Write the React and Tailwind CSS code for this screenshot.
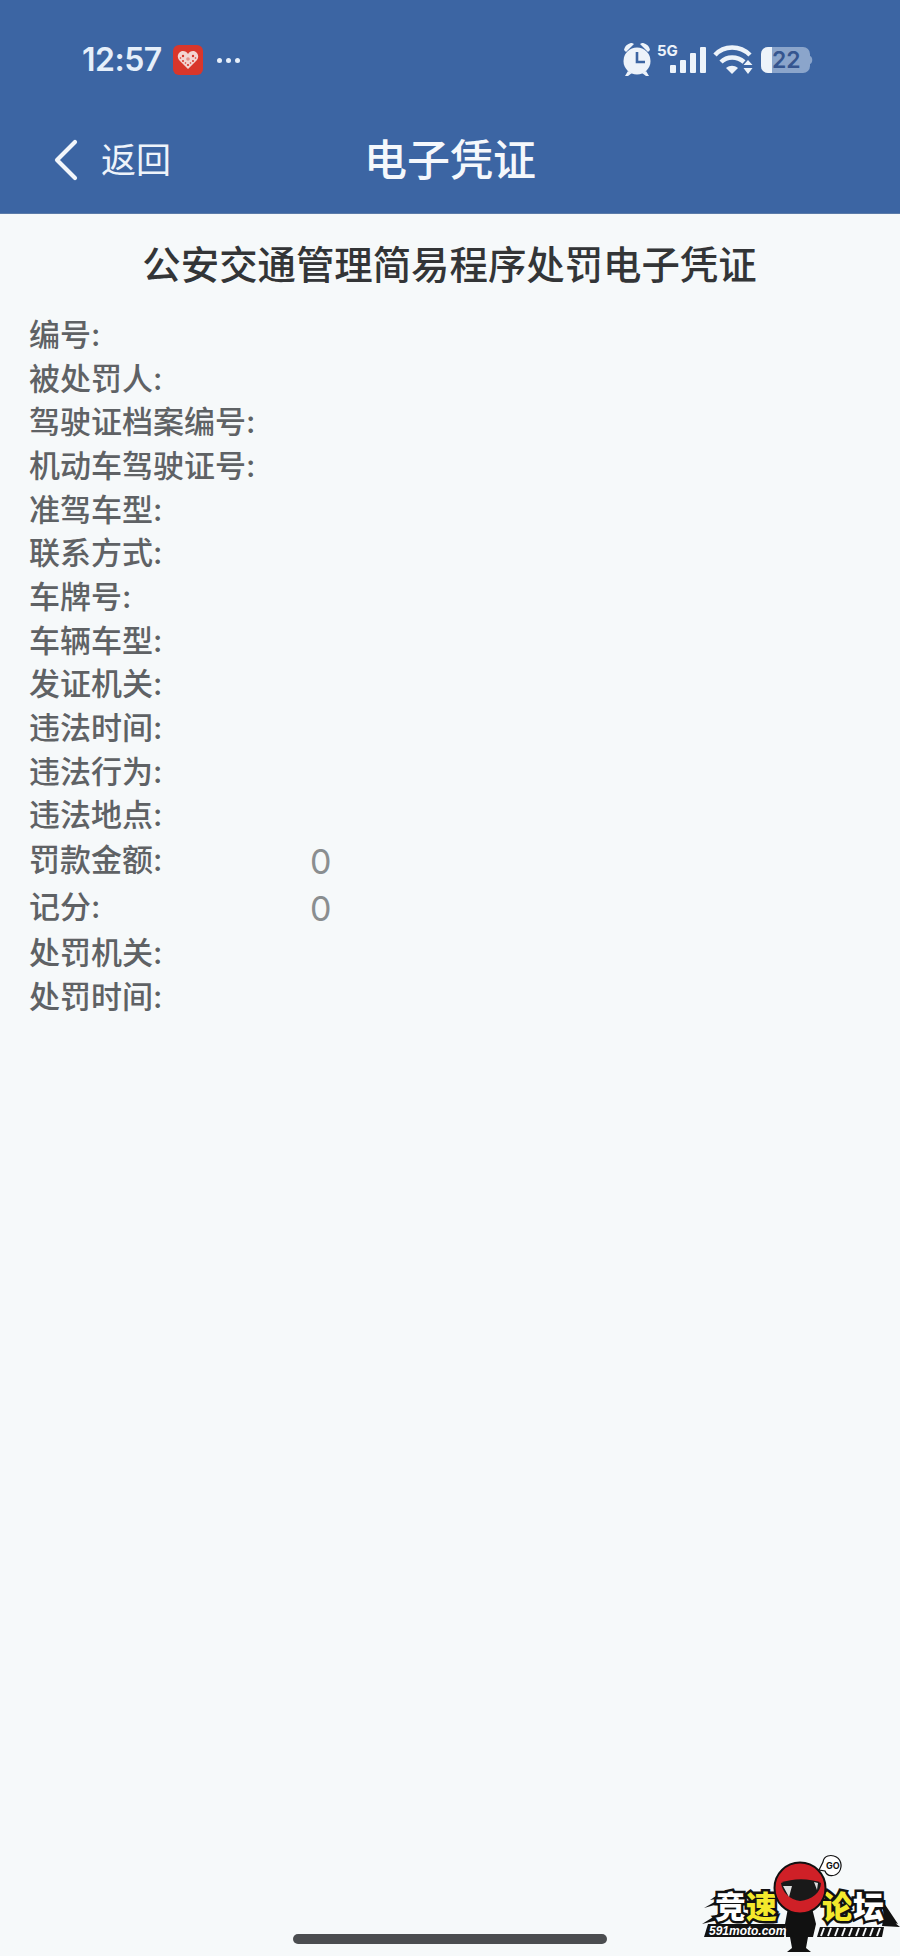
const FONT = 'font-["Inter","Noto_Sans_CJK_SC",sans-serif]';

const ROWS_TOP = [
  '编号:', '被处罚人:', '驾驶证档案编号:', '机动车驾驶证号:', '准驾车型:', '联系方式:',
  '车牌号:', '车辆车型:', '发证机关:', '违法时间:', '违法行为:', '违法地点:',
];
const ROWS_BOTTOM = ['处罚机关:', '处罚时间:'];

function Row({ label, value }) {
  return (
    <div className={`flex text-[31px] ${value ? 'h-[47px] pt-[2px] leading-[42px]' : 'h-[43.67px] leading-[43.67px]'}`}>
      <div className="w-[281px] font-medium text-[#5f6265]">{label}</div>
      {value && <div className="pt-[2px] text-[34px] leading-[42px] text-[#8a8e90]">{value}</div>}
    </div>
  );
}

function HeartBadge() {
  return (
    <div className="flex h-[30px] w-[30px] items-center justify-center rounded-[6px] bg-[#d9362b]">
      <svg width="22" height="20" viewBox="0 0 22 20">
        <path d="M11 19 L2 10 C-1 6 2 1 6 1 C8 1 10 2 11 4 C12 2 14 1 16 1 C20 1 23 6 20 10 Z" fill="#f3d5d2" />
        <g fill="#d9362b">
          <circle cx="6" cy="6" r="1.2" /><circle cx="11" cy="9" r="1.8" fill="#e68f88" /><circle cx="16" cy="6" r="1.2" />
          <circle cx="6" cy="11" r="1" /><circle cx="16" cy="11" r="1" /><circle cx="11" cy="15" r="1.1" />
          <circle cx="8.5" cy="13" r=".8" /><circle cx="13.5" cy="13" r=".8" /><circle cx="3.5" cy="8" r=".8" /><circle cx="18.5" cy="8" r=".8" />
        </g>
      </svg>
    </div>
  );
}

function StatusIcons() {
  return (
    <svg width="192" height="40" viewBox="0 0 192 40">
      {/* alarm */}
      <g fill="#edf3fa">
        <circle cx="15" cy="21" r="13.5" />
        <path d="M2 10 C3 5 7 3 10 3 L12 4 L4 12 Z" />
        <path d="M28 10 C27 5 23 3 20 3 L18 4 L26 12 Z" />
        <path d="M6 31 L3 36 L6 36 L10 33 Z M24 31 L27 36 L24 36 L20 33 Z" />
      </g>
      <path d="M15 12 V22 H23" fill="none" stroke="#3c65a3" strokeWidth="2.6" />
      {/* 5G */}
      <text x="35" y="16" fill="#edf3fa" fontSize="15" fontWeight="700" fontFamily="Inter, sans-serif">5G</text>
      {/* signal */}
      <g fill="#edf3fa">
        <rect x="48" y="25" width="6" height="8" rx="1" />
        <rect x="58" y="20" width="6" height="13" rx="1" />
        <rect x="68" y="13" width="6" height="20" rx="1" />
        <rect x="78" y="7" width="6" height="26" rx="1" />
      </g>
      {/* wifi */}
      <g fill="none" stroke="#edf3fa" strokeWidth="4.5">
        <path d="M93 15 C102 5 118 5 128 15" />
        <path d="M99 22 C105 16 115 16 122 22" />
      </g>
      <path d="M104 28 C108 25 112 25 116 28 L110 34 Z" fill="#edf3fa" />
      <path d="M126 20 L130.500 25 H121.500 Z M126 34 L130.500 28 H121.500 Z" fill="#edf3fa" />
      {/* battery */}
      <rect x="139" y="7" width="49" height="26" rx="7" fill="#8ba5cb" />
      <path d="M146 7 H150 V33 H146 A7 7 0 0 1 139 26 V14 A7 7 0 0 1 146 7 Z" fill="#edf3fa" />
      <path d="M188 16 C191 17 191 23 188 24 Z" fill="#8ba5cb" />
      <text x="150" y="28" fill="#35558f" fontSize="23" fontWeight="600" fontFamily="Inter, sans-serif">22</text>
    </svg>
  );
}

function ForumLogo() {
  const stroke = '[-webkit-text-stroke:5px_#111] [paint-order:stroke_fill]';
  return (
    <div className="relative h-[116px] w-[220px]">
      <svg className="absolute inset-0" width="220" height="116" viewBox="0 0 220 116">
        {/* speed lines */}
        <path d="M24 68 L38 60 L38 64 Z M30 60 L42 52 L42 58 Z M22 84 L38 74 L38 80 Z" fill="#111" />
        <path d="M202 60 L218 84 L204 80 Z M204 74 L220 87 L202 86 Z" fill="#111" />
        {/* site name plate and stripes */}
        <path d="M24 97 L28 84 H106 L104 97 Z" fill="#111" />
        <path d="M137 97 L140 87 H204 L202 97 Z" fill="#111" />
        <g stroke="#f5f8fa" strokeWidth="2">
          {[141, 148, 155, 162, 169, 176, 183, 190, 197].map((x) => (
            <path key={x} d={`M${x + 3} 88 L${x} 96`} />
          ))}
        </g>
      </svg>
      <div className={`absolute left-[35px] top-[50px] flex text-[31px] leading-[34px] font-black ${FONT} ${stroke}`}>
        <span className="text-white">竞</span>
        <span className="text-[#f3e92c]">速</span>
      </div>
      <div className={`absolute left-[142px] top-[50px] flex text-[31px] leading-[34px] font-black ${FONT} ${stroke}`}>
        <span className="text-[#f3e92c]">论</span>
        <span className="text-white">坛</span>
      </div>
      <svg className="absolute inset-0" width="220" height="116" viewBox="0 0 220 116">
        {/* rider */}
        <path d="M108 68 H132 L136 84 L133 97 L128 97 L126 108 L131 112 H107 L112 108 L110 97 L106 97 L105 84 Z" fill="#111" />
        <circle cx="120" cy="48" r="25.5" fill="#cf2027" stroke="#111" strokeWidth="2" />
        <path d="M101 43 C112 38 130 38 141 43 C141 52 132 60 120 61 C110 60 102 52 101 43 Z" fill="#191919" />
        <path d="M103 46 L112 46 L109 57 Z M134 42 L138 43 L137 50 Z" fill="#ddd" />
        {/* speech bubble */}
        <path d="M139 30 L143 22 C144 15 151 15 154 16 C161 18 163 26 159 32 C155 37 147 37 145 31 Z" fill="#fff" stroke="#111" strokeWidth="1.2" />
        <text x="146" y="29" fontSize="9" fontWeight="700" fill="#111" fontFamily="Inter, sans-serif">GO</text>
      </svg>
      <div className="absolute left-[29px] top-[85px] font-['Liberation_Sans',sans-serif] text-[12px] leading-[12px] font-bold italic text-white">
        591moto.com
      </div>
    </div>
  );
}

export default function App() {
  return (
    <div className={`relative flex h-[1956px] w-[900px] flex-col overflow-hidden bg-[#f6f9fa] ${FONT}`}>
      <header className="h-[214px] border-b border-[#5b7ba9] bg-[#3c65a3]">
        {/* status bar */}
        <div className="flex h-[120px] items-center pr-[86px] pl-[82px]">
          <span className="text-[32px] font-semibold tracking-[-0.5px] text-[#e6effa]">12:57</span>
          <div className="ml-[11px]"><HeartBadge /></div>
          <div className="ml-[14px] flex gap-[4px]">
            <span className="h-[5px] w-[5px] rounded-full bg-[#e6effa]" />
            <span className="h-[5px] w-[5px] rounded-full bg-[#e6effa]" />
            <span className="h-[5px] w-[5px] rounded-full bg-[#e6effa]" />
          </div>
          <div className="ml-auto"><StatusIcons /></div>
        </div>
        {/* nav bar */}
        <div className="relative flex h-[80px] items-center justify-center">
          <div className="absolute top-[19px] left-[53px] flex items-center">
            <svg width="26" height="42" viewBox="0 0 26 42">
              <path d="M22 3 L4 21 L22 39" fill="none" stroke="#f2f6fb" strokeWidth="4.2" strokeLinecap="round" strokeLinejoin="round" />
            </svg>
            <span className="ml-[22px] text-[35px] leading-[42px] text-[#eef3fa]">返回</span>
          </div>
          <h1 className="text-[43px] leading-[50px] font-medium text-[#f5f8fc]">电子凭证</h1>
        </div>
      </header>

      <main className="pr-[30px] pl-[29px]">
        <h2 className="pt-[26px] pb-[23px] text-center text-[38.4px] leading-[50px] font-medium text-[#333537]">
          公安交通管理简易程序处罚电子凭证
        </h2>
        <div className="flex flex-col">
          {ROWS_TOP.map((label) => <Row key={label} label={label} />)}
          <Row label="罚款金额:" value="0" />
          <Row label="记分:" value="0" />
          {ROWS_BOTTOM.map((label) => <Row key={label} label={label} />)}
        </div>
      </main>

      {/* home indicator + watermark */}
      <div className="absolute bottom-[12px] left-[293px] h-[10px] w-[314px] rounded-full bg-[#4b4d50]" />
      <div className="absolute right-0 bottom-0"><ForumLogo /></div>
    </div>
  );
}
